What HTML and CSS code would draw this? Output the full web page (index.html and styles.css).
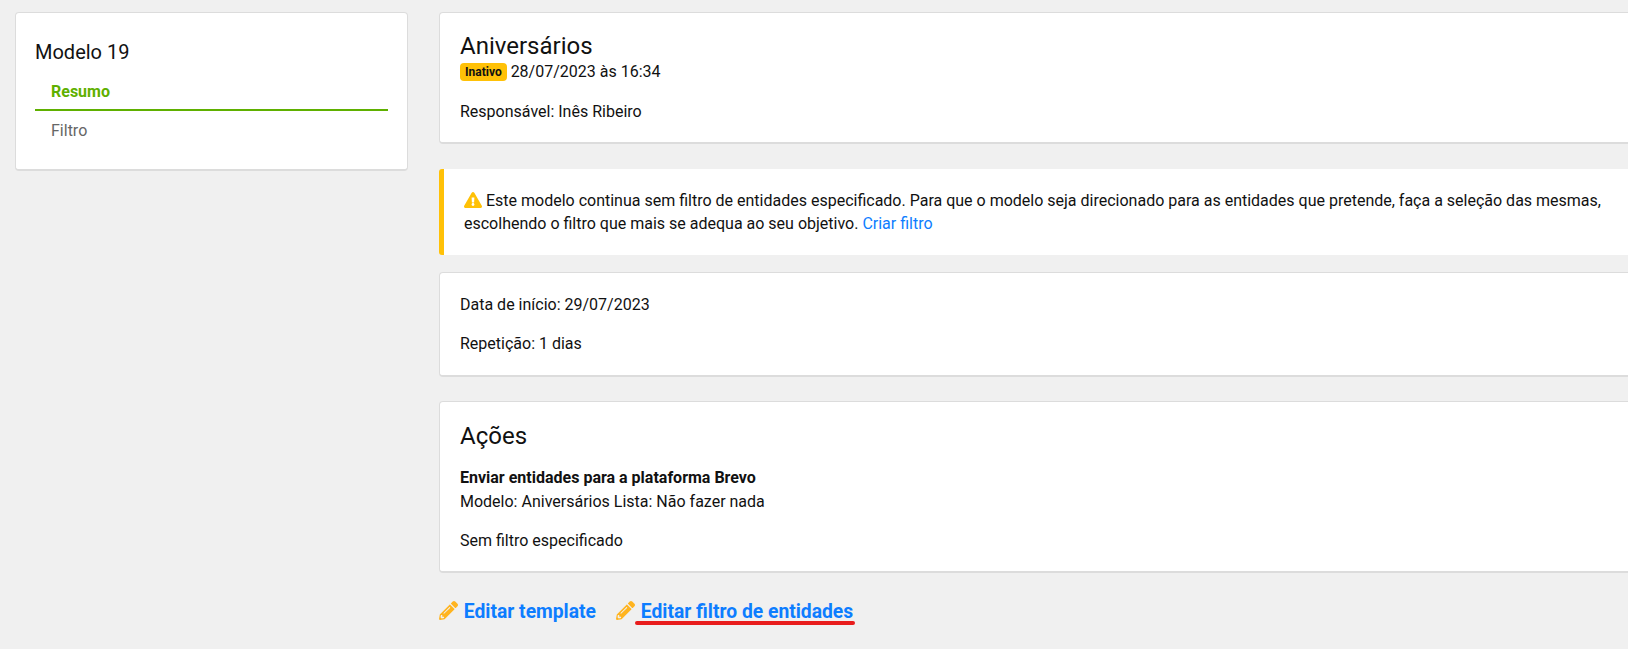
FILE: index.html
```html
<!DOCTYPE html>
<html lang="pt">
<head>
    <meta charset="UTF-8">
    <meta name="viewport" content="width=device-width, initial-scale=1.0">
    <title>Modelo 19 - Resumo</title>
    <link rel="stylesheet" href="styles.css">
</head>
<body>
    <div class="layout">
        <!-- Side menu -->
        <aside class="card side-card">
            <h2 class="side-title">Modelo 19</h2>
            <a class="side-link active" href="#">Resumo</a>
            <a class="side-link" href="#">Filtro</a>
        </aside>

        <main class="content">
            <section class="card head-card">
                <h1 class="card-title">Aniversários</h1>
                <div class="status-line"><span class="badge">Inativo</span> 28/07/2023 às 16:34</div>
                <p class="owner">Responsável: Inês Ribeiro</p>
            </section>

            <section class="alert">
                <svg class="alert-icon" viewBox="0 0 576 512"><path d="M569.517 440.013C587.975 472.007 564.806 512 527.94 512H48.054c-36.937 0-59.999-40.055-41.577-71.987L246.423 24.035c18.467-32.009 64.72-31.951 83.154 0l239.94 416.178zM288 354c-25.405 0-46 20.595-46 46s20.595 46 46 46 46-20.595 46-46-20.595-46-46-46zm-43.673-165.346l7.418 136c.347 6.364 5.609 11.346 11.982 11.346h48.546c6.373 0 11.635-4.982 11.982-11.346l7.418-136c.375-6.874-5.098-12.654-11.982-12.654h-63.383c-6.884 0-12.356 5.78-11.981 12.654z"/></svg>
                Este modelo continua sem filtro de entidades especificado. Para que o modelo seja direcionado para as entidades que pretende, faça a seleção das mesmas, escolhendo o filtro que mais se adequa ao seu objetivo. <a href="#">Criar filtro</a>
            </section>

            <section class="card dates-card">
                <p>Data de início: 29/07/2023</p>
                <p>Repetição: 1 dias</p>
            </section>

            <section class="card actions-card">
                <h2 class="card-title">Ações</h2>
                <strong class="action-name">Enviar entidades para a plataforma Brevo</strong>
                <div>Modelo: Aniversários Lista: Não fazer nada</div>
                <p class="action-filter">Sem filtro especificado</p>
            </section>

            <div class="edit-links">
                <a class="edit-link" href="#">
                    <svg class="pencil" viewBox="0 0 512 512"><path d="M497.9 142.1l-46.1 46.1c-4.7 4.7-12.3 4.7-17 0l-111-111c-4.7-4.7-4.7-12.3 0-17l46.1-46.1c18.7-18.7 49.1-18.7 67.9 0l60.1 60.1c18.8 18.7 18.8 49.1 0 67.9zM284.2 99.8L21.6 362.4.4 483.9c-2.9 16.4 11.4 30.6 27.8 27.8l121.5-21.3 262.6-262.6c4.7-4.7 4.7-12.3 0-17l-111-111c-4.8-4.7-12.4-4.7-17.1 0zM124.1 339.9c-5.5-5.5-5.5-14.3 0-19.8l154-154c5.5-5.5 14.3-5.5 19.8 0s5.5 14.3 0 19.8l-154 154c-5.5 5.5-14.3 5.5-19.8 0zM88 424h48v36l-64.5 11.3-31.1-31.1L51.7 376H88v48z"/></svg>
                    Editar template
                </a>
                <a class="edit-link marked" href="#">
                    <svg class="pencil" viewBox="0 0 512 512"><path d="M497.9 142.1l-46.1 46.1c-4.7 4.7-12.3 4.7-17 0l-111-111c-4.7-4.7-4.7-12.3 0-17l46.1-46.1c18.7-18.7 49.1-18.7 67.9 0l60.1 60.1c18.8 18.7 18.8 49.1 0 67.9zM284.2 99.8L21.6 362.4.4 483.9c-2.9 16.4 11.4 30.6 27.8 27.8l121.5-21.3 262.6-262.6c4.7-4.7 4.7-12.3 0-17l-111-111c-4.8-4.7-12.4-4.7-17.1 0zM124.1 339.9c-5.5-5.5-5.5-14.3 0-19.8l154-154c5.5-5.5 14.3-5.5 19.8 0s5.5 14.3 0 19.8l-154 154c-5.5 5.5-14.3 5.5-19.8 0zM88 424h48v36l-64.5 11.3-31.1-31.1L51.7 376H88v48z"/></svg>
                    Editar filtro de entidades
                </a>
            </div>
        </main>
    </div>
</body>
</html>
```

FILE: styles.css
```css
html, body {
    height: 100%;
}
body {
    margin: 0;
    overflow: hidden;
    background-color: #f0f0f0;
    color: #111;
    font-family: Roboto, "Liberation Sans", sans-serif;
    font-size: 16px;
    line-height: 24px;
}
p {
    margin: 0;
}
a {
    color: #0d7dff;
    text-decoration: none;
}
.layout {
    display: flex;
    align-items: flex-start;
    gap: 31px;
    width: 1640px;
    padding: 12px 0 0 15px;
}
.card {
    box-sizing: border-box;
    background: white;
    border: 1px solid #dcdcdc;
    border-bottom-width: 2px;
    border-radius: 4px;
    padding: 20px;
}

/* side menu */
.side-card {
    flex: 0 0 393px;
    height: 159px;
    padding: 26px 19px 0;
}
.side-title {
    margin: 0 0 8px;
    font-size: 20px;
    font-weight: 400;
    line-height: 27px;
}
.side-link {
    display: block;
    height: 39px;
    padding-left: 16px;
    color: #666;
    line-height: 39px;
}
.side-link.active {
    height: 35px;
    line-height: 35px;
    border-bottom: 2px solid #5fb000;
    color: #5fb000;
    font-weight: 700;
}

/* main column */
.content {
    flex: 0 0 1200px;
    min-width: 0;
}
.card-title {
    margin: 0;
    font-size: 24px;
    font-weight: 400;
    line-height: 28px;
}
.head-card {
    height: 132px;
    padding-top: 19px;
}
.status-line {
    line-height: 24px;
}
.badge {
    display: inline-block;
    padding: 0 5px;
    background-color: #ffc107;
    border-radius: 4px;
    font-size: 12px;
    font-weight: 700;
    line-height: 18px;
    vertical-align: 1px;
}
.owner {
    margin-top: 16px;
}
.alert {
    box-sizing: border-box;
    height: 86px;
    margin-top: 25px;
    padding: 20px 20px 0 20px;
    background: white;
    border-left: 5px solid #ffc107;
    border-radius: 3px 0 0 3px;
    line-height: 23px;
}
.alert-icon {
    width: 18px;
    height: 16px;
    fill: #ffc107;
    vertical-align: -2px;
}
.dates-card {
    height: 105px;
    margin-top: 17px;
    padding-top: 20px;
}
.dates-card p + p {
    margin-top: 15px;
}
.actions-card {
    height: 172px;
    margin-top: 24px;
    padding-top: 20px;
}
.action-name {
    display: block;
    margin-top: 16px;
}
.action-filter {
    margin-top: 15px;
}

/* links under the cards */
.edit-links {
    display: flex;
    gap: 20px;
    margin-top: 27px;
    font-size: 19.3px;
    font-weight: 700;
}
.edit-link {
    position: relative;
    display: block;
}
.pencil {
    width: 19px;
    height: 19px;
    margin-right: 1px;
    fill: #ffb41f;
    vertical-align: -2px;
}
.edit-link.marked::after {
    content: "";
    position: absolute;
    left: 19px;
    right: -2px;
    bottom: -1px;
    height: 4px;
    background-color: #e81c1c;
    border-radius: 2px;
}
```
